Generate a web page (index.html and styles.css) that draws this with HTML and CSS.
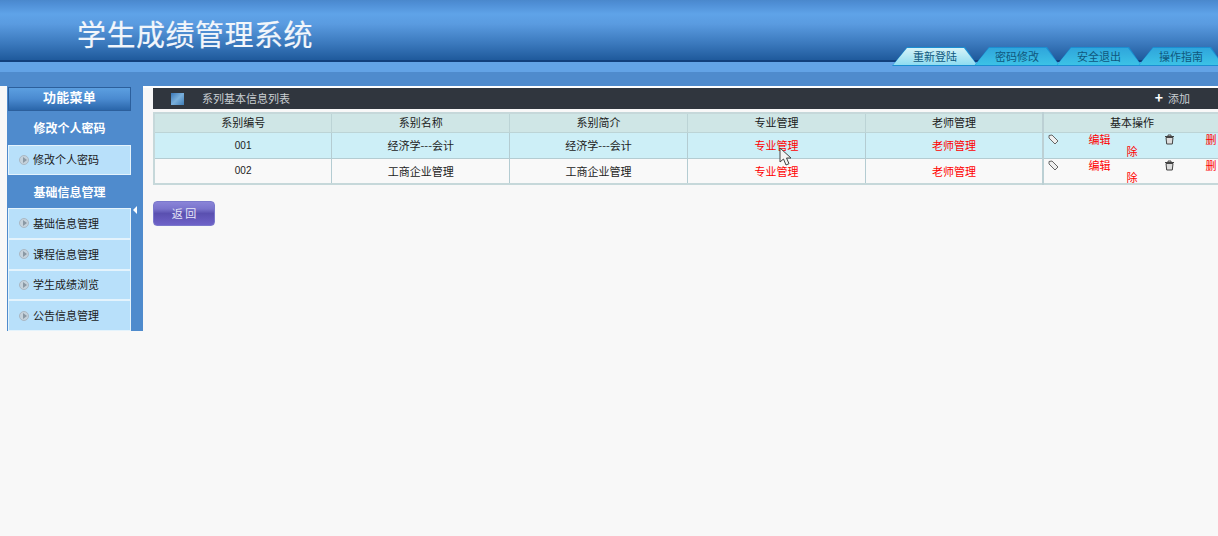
FILE: index.html
```html
<!DOCTYPE html>
<html lang="zh-CN">
<head>
<meta charset="utf-8">
<title>学生成绩管理系统</title>
<link rel="stylesheet" href="styles.css">
</head>
<body>
<header class="top">
  <h1 class="brand">学生成绩管理系统</h1>
  <nav class="tabs">
    <a class="tab tab-active"><span>重新登陆</span></a>
    <a class="tab"><span>密码修改</span></a>
    <a class="tab"><span>安全退出</span></a>
    <a class="tab"><span>操作指南</span></a>
  </nav>
</header>
<div class="band"></div>
<div class="layout">
  <aside class="side">
    <div class="menu">
      <div class="menu-title">功能菜单</div>
      <div class="group">修改个人密码</div>
      <a class="item"><i class="bullet"></i>修改个人密码</a>
      <div class="group group-2">基础信息管理</div>
      <a class="item item-sm"><i class="bullet"></i>基础信息管理</a>
      <a class="item item-sm"><i class="bullet"></i>课程信息管理</a>
      <a class="item item-sm"><i class="bullet"></i>学生成绩浏览</a>
      <a class="item item-sm"><i class="bullet"></i>公告信息管理</a>
    </div>
    <div class="splitter"><i class="arrow"></i></div>
  </aside>
  <main class="main">
    <div class="titlebar">
      <i class="title-icon"></i>
      <span class="title-text">系列基本信息列表</span>
      <a class="add"><b class="plus">+</b>添加</a>
    </div>
    <table class="grid">
      <thead>
        <tr><th>系别编号</th><th>系别名称</th><th>系别简介</th><th>专业管理</th><th>老师管理</th><th class="ops-head">基本操作</th></tr>
      </thead>
      <tbody>
        <tr class="row-hi">
          <td class="num">001</td><td>经济学---会计</td><td>经济学---会计</td>
          <td class="cursor-cell"><a class="link">专业管理</a>
            <svg class="cursor" width="14" height="20" viewBox="0 0 14 20"><path d="M1 1v14l3.500-3 2.500 6 3-1.300-2.500-5.700h4.500z" fill="#f4f4f4" stroke="#444" stroke-width="1"/></svg>
          </td>
          <td><a class="link">老师管理</a></td>
          <td class="ops">
            <svg class="op-icon tag" width="11" height="11" viewBox="0 0 11 11"><path d="M1 1.500 4 1l6 6-3 3-6-6z" fill="#eee" stroke="#666"/></svg><a class="link">编辑</a><svg class="op-icon bin" width="11" height="11" viewBox="0 0 11 11"><path d="M1 2.500h9M4 2V1h3v1M2 3.500l.7 6.500h5.600L9 3.500z" fill="#ddd" stroke="#444"/></svg><a class="link">删除</a>
          </td>
        </tr>
        <tr>
          <td class="num">002</td><td>工商企业管理</td><td>工商企业管理</td>
          <td><a class="link">专业管理</a></td>
          <td><a class="link">老师管理</a></td>
          <td class="ops">
            <svg class="op-icon tag" width="11" height="11" viewBox="0 0 11 11"><path d="M1 1.500 4 1l6 6-3 3-6-6z" fill="#eee" stroke="#666"/></svg><a class="link">编辑</a><svg class="op-icon bin" width="11" height="11" viewBox="0 0 11 11"><path d="M1 2.500h9M4 2V1h3v1M2 3.500l.7 6.500h5.600L9 3.500z" fill="#ddd" stroke="#444"/></svg><a class="link">删除</a>
          </td>
        </tr>
      </tbody>
    </table>
    <button class="back">返 回</button>
  </main>
</div>
</body>
</html>
```
FILE: styles.css
```css
* { box-sizing: border-box; }
html, body { margin: 0; height: 100%; overflow: hidden; }
body {
  background: #f8f8f8;
  font: 11px/1.2 "Noto Sans CJK SC", "Liberation Sans", sans-serif;
  color: #222;
}
a { text-decoration: none; }

.top {
  height: 72px;
  display: flex;
  justify-content: space-between;
  align-items: flex-end;
  background: linear-gradient(to bottom,
    #4a88cc 0, #4f8fd6 4px, #5fa3e8 14px, #5a9be0 24px, #3a78bc 44px, #1f5a9c 60px,
    #123f7c 60px, #123f7c 62px, #63a3e6 62px, #63a3e6 72px);
}
.brand {
  margin: 0 0 22px 77px;
  font-size: 29px;
  line-height: 34px;
  letter-spacing: .5px;
  font-weight: 400;
  color: #f2f6fb;
  -webkit-text-stroke: .2px #f2f6fb;
}
.tabs { display: flex; margin-bottom: 6px; margin-right: -6px; }
.tab {
  position: relative;
  display: block;
  width: 86px;
  height: 19px;
  margin-left: -4px;
  text-align: center;
  color: #10587e;
  line-height: 19px;
  clip-path: polygon(0 100%, 15px 0, 73px 0, 86px 100%);
  background: #1a8fd2;
}
.tab::before {
  content: "";
  position: absolute;
  inset: 1px 0 1px;
  clip-path: polygon(1px 100%, 15px 0, 72px 0, 85px 100%);
  background: linear-gradient(to bottom, #2fa6dc, #3cc2e6);
}
.tab-active::before { background: linear-gradient(to bottom, #d6f3f8, #8fdcf0); }
.tab span { position: relative; }

.band { height: 14px; background: #4f8bcd; }

.layout { display: flex; align-items: flex-start; }

.side {
  display: flex;
  flex: none;
  width: 143px;
  padding-left: 7px;
  background: linear-gradient(to right, #f8f8f8 7px, #4f8bcd 7px);
}
.menu { width: 124px; padding-left: 1px; }
.menu-title {
  height: 24px;
  margin-top: 1px;
  line-height: 18px;
  letter-spacing: .2px;
  text-align: center;
  color: #fff;
  font-size: 13px;
  font-weight: 700;
  border: 1px solid #2c5f9c;
  background: linear-gradient(to bottom, #5c9fe0, #4a8ad0 50%, #2a66aa);
}
.group {
  height: 34px;
  line-height: 34px;
  text-align: center;
  color: #fff;
  font-size: 12px;
  font-weight: 700;
}
.group-2 { height: 33px; line-height: 33px; }
.item {
  display: flex;
  align-items: center;
  height: 30px;
  padding-left: 10px;
  color: #1a1a1a;
  background: #b8e0fa;
  border: 1px solid #e4f3fc;
}
.item-sm { height: 30.75px; }
.bullet {
  position: relative;
  flex: none;
  width: 10px;
  height: 10px;
  margin-right: 4px;
  border-radius: 50%;
  background: #c5d2dc;
  border: 1px solid #aab8c4;
}
.bullet::after {
  content: "";
  position: absolute;
  left: 3px;
  top: 1px;
  border-left: 4px solid #8a98a4;
  border-top: 3px solid transparent;
  border-bottom: 3px solid transparent;
}
.splitter {
  flex: 1;
  display: flex;
  align-items: center;
  padding-left: 2px;
}
.arrow {
  border-right: 4px solid #fff;
  border-top: 4px solid transparent;
  border-bottom: 4px solid transparent;
  margin-top: 2px;
}

.main {
  flex: 1;
  min-width: 0;
  min-height: 450px;
  overflow: hidden;
  padding: 2px 0 0 10px;
  background: linear-gradient(to bottom, #fff 2px, #f8f8f8 2px);
}
.titlebar {
  display: flex;
  align-items: center;
  height: 21px;
  margin-bottom: 3px;
  padding: 0 28px 0 18px;
  color: #c9ced2;
  background: #30363e;
}
.title-icon {
  width: 13px;
  height: 12px;
  background: linear-gradient(135deg, #3a78b8, #7ab0dc 50%, #3f7db6);
}
.title-text { margin-left: 18px; }
.add { margin-left: auto; color: #c9ced2; }
.plus { margin-right: 5px; color: #fff; font-size: 14px; line-height: 12px; }

.grid {
  width: 1069px;
  table-layout: fixed;
  border-collapse: collapse;
  border: 2px solid #c6d8da;
  text-align: center;
}
.grid th, .grid td {
  padding: 0;
  border: 1px solid #b4ccd2;
}
.grid th {
  height: 19px;
  font-weight: 400;
  color: #1a1a1a;
  background: #cfe6e6;
  border-color: #bcd4d6;
}
.grid td { height: 26px; padding-top: 1px; background: #f9f9f9; }
.grid .row-hi td { background: #cdeff7; }
.grid th:first-child, .grid td:first-child { border-left: 2px solid #c6d8da; }
.grid .ops-head, .grid .ops { border-left: 2px solid #bcd0d4; }
.num { font-size: 10px; font-family: "Liberation Sans", sans-serif; }
.link { color: #f00; }
.cursor-cell { position: relative; }
.cursor { position: absolute; left: 91px; top: 14px; }
.grid .ops { padding-top: 0; line-height: 12px; vertical-align: top; }
.op-icon { vertical-align: top; margin-top: 1px; }
.tag { margin-right: 30px; }
.bin { margin-left: 53px; margin-right: 31px; }

.back {
  display: block;
  width: 62px;
  height: 25px;
  margin-top: 16px;
  padding: 0;
  font: inherit;
  color: #e8e8f8;
  border: 1px solid #7a78cc;
  border-radius: 4px;
  background: linear-gradient(to bottom, #8a84d8 0, #7a74cc 30%, #5a50b0 50%, #6e62c8);
}
```
